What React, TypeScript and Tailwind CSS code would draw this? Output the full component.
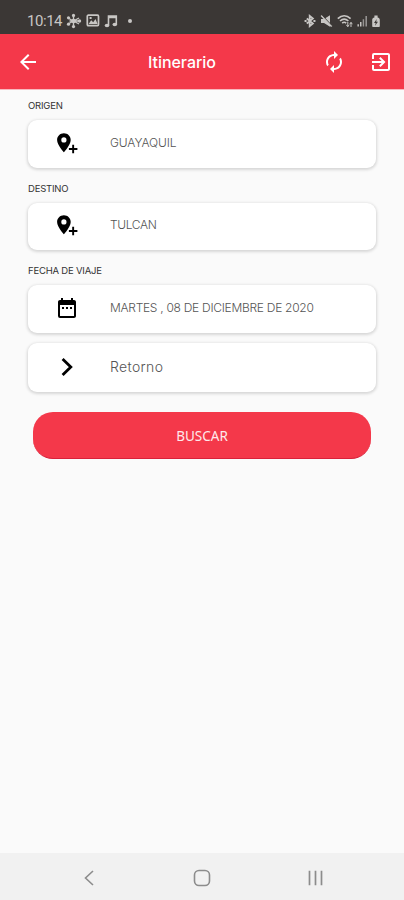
import type { ReactNode } from 'react';
import { MdArrowBack, MdAutorenew, MdDateRange, MdExitToApp } from 'react-icons/md';

function PinPlusIcon() {
  return (
    <svg width="24" height="24" viewBox="0 0 24 24" fill="currentColor">
      <path
        fillRule="evenodd"
        d="M8.9 2.2C5.1 2.2 2.1 5.1 2.1 8.9c0 4.9 6.8 12.3 6.8 12.3s6.8-7.4 6.8-12.3c0-3.8-3-6.7-6.8-6.7zm0 4.1a2.6 2.6 0 1 1 0 5.2 2.6 2.6 0 0 1 0-5.2z"
      />
      <path d="M17.2 13.7h1.9V17h3.3v1.9h-3.3v3.3h-1.9v-3.3h-3.3V17h3.3z" />
    </svg>
  );
}

function ChevronIcon() {
  return (
    <svg width="24" height="24" viewBox="0 0 24 24" fill="none" stroke="currentColor" strokeWidth="2.8">
      <path d="M7.6 4 15.8 12l-8.2 8" />
    </svg>
  );
}

function StatusBar() {
  return (
    <div className="flex h-[34px] items-end justify-between bg-[#3b3735] pr-[24px] pb-[5px] pl-[27px] text-[#c8c6c4]">
      <div className="flex items-center">
        <span className="w-[39px] translate-y-px font-[Roboto] text-[15px] leading-[17px] tracking-[-0.45px]">10:14</span>
        <svg width="16" height="16" viewBox="0 0 16 16" fill="none" stroke="currentColor" strokeWidth="1.4">
          <path d="M7.5 2v12M2 5l11 6M2 11l11-6M3.5 8h10" />
          <g fill="currentColor" stroke="none">
            <circle cx="7.5" cy="2.4" r="1.6" />
            <circle cx="7.5" cy="13.6" r="1.6" />
            <circle cx="2.5" cy="4.8" r="1.6" />
            <circle cx="2.5" cy="11.2" r="1.6" />
            <circle cx="13.5" cy="8" r="1.7" />
            <circle cx="7.5" cy="8" r="2.2" />
          </g>
        </svg>
        <svg className="ml-1" width="14" height="13" viewBox="0 0 14 13">
          <rect x="1.3" y="1.2" width="11.2" height="10.4" rx="1" fill="none" stroke="currentColor" strokeWidth="1.7" />
          <path d="M2.6 10l2.6-3.8 2 2.1L9.5 5l2.1 5zM3.6 3h2v2h-2z" fill="currentColor" />
        </svg>
        <svg className="ml-[4px]" width="14" height="14" viewBox="0 0 14 14">
          <path d="M4.5 11.3V2h7.8v8.5M4.5 3.5h7.8" fill="none" stroke="currentColor" strokeWidth="1.6" />
          <ellipse cx="3" cy="11.5" rx="2.3" ry="1.8" fill="currentColor" />
          <ellipse cx="10.8" cy="10.5" rx="2.3" ry="1.8" fill="currentColor" />
        </svg>
        <span className="ml-[10px] size-[4px] rounded-full bg-current" />
      </div>
      <div className="flex items-center gap-[4px] pb-px">
        <svg width="12" height="14" viewBox="0 0 13 14" fill="none" stroke="currentColor">
          <path d="M3 4.2l6.6 5.4-3.4 2.8V1.6l3.4 2.8L3 9.8" strokeWidth="2" />
          <path d="M.6 7h2.2M10.2 7h2.2" strokeWidth="2.2" />
        </svg>
        <svg width="13" height="14" viewBox="0 0 13 14">
          <path d="M1 5h3l6-3.7v11.4L4 9H1z" fill="currentColor" />
          <path d="M1.2 1.5l10.5 11" stroke="currentColor" strokeWidth="1.8" />
          <path d="M2.2 1.2l10 10.5" stroke="#3b3735" strokeWidth=".8" />
        </svg>
        <svg width="16" height="14" viewBox="0 0 16 14" fill="none" stroke="currentColor" strokeWidth="1.6">
          <path d="M.8 4.6C4.7.9 9.7.9 13.6 4.6M3 7c2.6-2.4 5.8-2.4 8.4 0M5.2 9.2c1.3-1.2 2.7-1.2 4 0" />
          <path d="M10.8 8v4.6M9.3 10.8l1.5 1.9 1.3-1.9M14 13V8.4M12.7 10.2L14 8.4l1.3 1.8" strokeWidth="1" />
        </svg>
        <svg width="11" height="14" viewBox="0 0 12 14" fill="currentColor">
          <path d="M.5 10.5h1.6V13H.5zM3.3 8h1.6v5H3.300z" />
          <path d="M6.2 5h1.6v8H6.200zM9.200 1.500h1.700V13H9.200z" opacity=".65" />
        </svg>
        <svg width="8" height="14" viewBox="0 0 8 14">
          <path d="M2.4 1.5h3.200v1.900C6.900 3.600 7.800 4.500 7.800 5.800V12c0 .7-.4 1.100-1.100 1.100H1.300C.6 13.100.2 12.700.2 12V5.800c0-1.300.9-2.200 2.200-2.400z" fill="currentColor" />
          <path d="M4.700 5L2 8.900h1.700L3 11.700l3-4H4.200z" fill="#3b3735" />
        </svg>
      </div>
    </div>
  );
}

function Header() {
  return (
    <header className="flex h-14 items-center border-b border-[#f9b8bf] bg-[#f4384a] pr-[11px] pl-4 text-white">
      <button aria-label="Volver">
        <MdArrowBack size={24} />
      </button>
      <h1 className="ml-[108px] text-[16px] leading-6 font-medium tracking-[-0.05px]">Itinerario</h1>
      <div className="ml-auto flex gap-[23px]">
        <MdAutorenew size={24} />
        <MdExitToApp size={24} />
      </div>
    </header>
  );
}

function Label({ children }: { children: ReactNode }) {
  return <p className="mb-[7px] text-[9.5px] leading-[15px] tracking-[-0.2px] text-[#333]">{children}</p>;
}

function Field({ icon, children }: { icon: ReactNode; children: ReactNode }) {
  return (
    <div className="mb-[13px] flex h-[47.5px] items-center rounded-[9px] bg-white pb-[2px] pl-[27px] shadow-[0_1px_3px_1px_rgba(0,0,0,0.14)]">
      <span className="w-[55px] text-black">{icon}</span>
      {children}
    </div>
  );
}

export default function App() {
  return (
    <div className="flex h-[900px] w-[404px] flex-col overflow-hidden bg-[#fafafa] font-['Inter','Liberation_Sans',sans-serif]">
      <StatusBar />
      <Header />
      <main className="flex-1 px-[28px] pt-2 text-[#555]">
        <Label>ORIGEN</Label>
        <Field icon={<PinPlusIcon />}>
          <span className="text-[12px] font-light tracking-[-0.1px]">GUAYAQUIL</span>
        </Field>
        <Label>DESTINO</Label>
        <Field icon={<PinPlusIcon />}>
          <span className="text-[12px] font-light tracking-[-0.35px]">TULCAN</span>
        </Field>
        <Label>FECHA DE VIAJE</Label>
        <Field icon={<MdDateRange size={24} />}>
          <span className="text-[12px] font-light tracking-[-0.28px] whitespace-nowrap">MARTES , 08 DE DICIEMBRE DE 2020</span>
        </Field>
        <div className="-mt-[3px] flex h-[49.5px] items-center rounded-[9px] bg-white pb-px pl-[27px] shadow-[0_1px_3px_1px_rgba(0,0,0,0.14)]">
          <span className="w-[55px] text-black">
            <ChevronIcon />
          </span>
          <span className="text-[14px] font-light tracking-[0.35px]">Retorno</span>
        </div>
        <button className="mx-[5px] mt-5 h-[47px] w-[338px] rounded-[20px] border-b border-[#d9213a] bg-[#f4384a] pt-[2px] font-['Noto_Sans',sans-serif] text-[13.5px] text-[#ffe9eb]">
          BUSCAR
        </button>
      </main>
      <nav className="flex h-[47px] items-center bg-[#f1f1f1] pt-[2px] pl-[80px] text-[#8c8c8c]">
        <svg width="18" height="20" viewBox="0 0 18 20" fill="none" stroke="currentColor" strokeWidth="1.6">
          <path d="M13 3L5.5 10l7.5 7" />
        </svg>
        <svg className="ml-[94px]" width="20" height="20" viewBox="0 0 20 20" fill="none" stroke="currentColor" strokeWidth="1.6">
          <rect x="2.5" y="2.5" width="15" height="15" rx="4.5" />
        </svg>
        <svg className="ml-[94px]" width="20" height="20" viewBox="0 0 20 20" fill="none" stroke="currentColor" strokeWidth="1.7">
          <path d="M3.5 2.8v14.4M9.5 2.8v14.4M15.5 2.8v14.4" />
        </svg>
      </nav>
    </div>
  );
}
